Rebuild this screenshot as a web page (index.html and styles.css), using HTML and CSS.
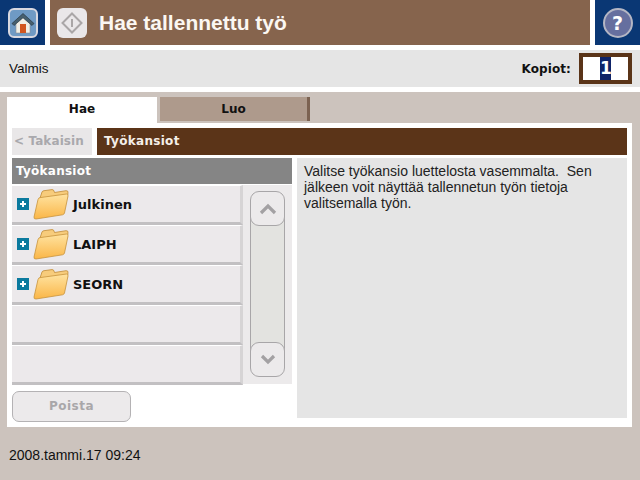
FILE: index.html
```html
<!doctype html>
<html lang="fi">
	<head>
		<meta charset="utf-8">
		<title>Hae tallennettu työ</title>
		<link rel="stylesheet" href="styles.css">
	</head>
	<body>
		<svg class="defs" width="0" height="0">
			<defs>
				<linearGradient id="folder-front" x1="0" y1="0" x2="0" y2="1">
					<stop offset="0" stop-color="#ffe3a0"/>
					<stop offset="1" stop-color="#fab648"/>
				</linearGradient>
				<g id="folder-icon">
					<path d="M7 10 L9 4 Q9.500 2.800 11 2.700 L19 1.600 Q20.500 1.500 21 3 L21.500 4.500 L33 2.700 Q35.500 2.500 35 5 L34 10 Z" fill="#f7cc7c" stroke="#c08a35" stroke-width="0.8"/>
					<path d="M1 29 L5 11.500 Q5.500 9.800 7 9.600 L33.500 6 Q35.500 5.900 35 8 L31.500 25 Q31 26.500 29.500 26.800 L3 31 Q0.700 31.200 1 29 Z" fill="url(#folder-front)" stroke="#c8933c" stroke-width="0.8"/>
				</g>
			</defs>
		</svg>

		<div class="header">
			<div class="nav-box">
				<div class="home-btn">
					<svg width="24" height="24" viewBox="0 0 24 24">
						<path d="M5 12 L12 6 L19 12 V22 H5 Z" fill="#f1efe6" stroke="#8a8f96" stroke-width="0.6"/>
						<path d="M12 2.500 L23 12.500 L21 14.500 L12 6.800 L3 14.500 L1 12.500 Z" fill="#47606f" stroke="#1f2c35" stroke-width="0.6"/>
						<rect x="9" y="13" width="6" height="9" fill="#d2561f"/>
					</svg>
				</div>
			</div>
			<div class="title-bar">
				<div class="start-btn">
					<svg width="24" height="24" viewBox="0 0 24 24">
						<path d="M12 2.500 L21.500 12 L12 21.500 L2.500 12 Z" fill="none" stroke="#aaa6a7" stroke-width="2"/>
						<rect x="11" y="8" width="2" height="8" fill="#aaa6a7"/>
					</svg>
				</div>
				<span class="title-text">Hae tallennettu työ</span>
			</div>
			<div class="nav-box">
				<div class="help-btn">?</div>
			</div>
		</div>

		<div class="status">
			<span class="status-text">Valmis</span>
			<span class="copies-label">Kopiot:</span>
			<div class="copies-input"><span class="copies-sel">1</span></div>
		</div>

		<div class="main">
			<div class="tabs">
				<div class="tab tab-active">Hae</div>
				<div class="tab tab-other">Luo</div>
			</div>
			<div class="panel">
				<div class="crumbs">
					<div class="back-btn">&lt; Takaisin</div>
					<div class="crumb-title">Työkansiot</div>
				</div>
				<div class="columns">
					<div class="left">
						<div class="list-head">Työkansiot</div>
						<div class="list-wrap">
							<div class="rows">
								<div class="row">
									<span class="plus"></span>
									<svg class="folder" width="36" height="32" viewBox="0 0 36 32"><use href="#folder-icon"/></svg>
									<span class="row-name">Julkinen</span>
								</div>
								<div class="row">
									<span class="plus"></span>
									<svg class="folder" width="36" height="32" viewBox="0 0 36 32"><use href="#folder-icon"/></svg>
									<span class="row-name">LAIPH</span>
								</div>
								<div class="row">
									<span class="plus"></span>
									<svg class="folder" width="36" height="32" viewBox="0 0 36 32"><use href="#folder-icon"/></svg>
									<span class="row-name">SEORN</span>
								</div>
								<div class="row"></div>
								<div class="row"></div>
							</div>
							<div class="scroll">
								<div class="scroll-btn">
									<svg width="18" height="12" viewBox="0 0 18 12"><path d="M2 10 L9 3 L16 10" fill="none" stroke="#a3a1a3" stroke-width="3.2"/></svg>
								</div>
								<div class="scroll-btn">
									<svg width="18" height="12" viewBox="0 0 18 12"><path d="M3 2 L9 8 L15 2" fill="none" stroke="#a3a1a3" stroke-width="3.2"/></svg>
								</div>
							</div>
						</div>
						<div class="delete-btn">Poista</div>
					</div>
					<div class="info">Valitse työkansio luettelosta vasemmalta.&nbsp; Sen jälkeen voit näyttää tallennetun työn tietoja valitsemalla työn.</div>
				</div>
			</div>
			<div class="footer">2008.tammi.17 09:24</div>
		</div>
	</body>
</html>
```

FILE: styles.css
```css
html, body {
	margin: 0;
	padding: 0;
}
body {
	width: 640px;
	height: 480px;
	overflow: hidden;
	background: #fff;
	color: #111;
	font-family: "Liberation Sans", Arial, sans-serif;
	font-size: 14px;
}
.defs {
	display: block;
}

.header {
	display: flex;
	gap: 5px;
	height: 45px;
}
.nav-box {
	width: 45px;
	background: #0a3774;
	display: flex;
	align-items: center;
	justify-content: center;
}
.home-btn {
	width: 30px;
	height: 30px;
	border-radius: 6px;
	background: #6f9ac4;
	border: 2px solid #d8d8e0;
	box-sizing: border-box;
	display: flex;
	align-items: center;
	justify-content: center;
}
.help-btn {
	width: 30px;
	height: 30px;
	box-sizing: border-box;
	border-radius: 50%;
	background: #666f9f;
	border: 2px solid #b4b6c4;
	color: #fff;
	font-family: "DejaVu Sans", sans-serif;
	font-weight: bold;
	font-size: 19px;
	line-height: 26px;
	text-align: center;
}
.title-bar {
	flex: 1;
	background: #86644d;
	display: flex;
	align-items: center;
	padding-left: 7px;
}
.start-btn {
	width: 30px;
	height: 30px;
	border-radius: 6px;
	background: #eae7e9;
	display: flex;
	align-items: center;
	justify-content: center;
}
.title-text {
	margin-left: 12px;
	color: #fbf7f2;
	font-size: 21px;
	font-weight: bold;
}

.status {
	display: flex;
	align-items: center;
	height: 37px;
	margin-top: 5px;
	padding: 0 8px 0 9px;
	background: #e5e5e5;
}
.status-text {
	flex: 1;
	font-size: 13.5px;
}
.copies-label {
	font-family: "DejaVu Sans", sans-serif;
	font-weight: bold;
	font-size: 12px;
	letter-spacing: 0.1px;
	margin-right: 8px;
}
.copies-input {
	width: 53px;
	height: 31px;
	box-sizing: border-box;
	border: 4px solid #5a3418;
	background: #fff;
	padding-left: 17px;
	display: flex;
	align-items: center;
}
.copies-sel {
	background: #0e2368;
	color: #fff;
	font-family: "DejaVu Sans", sans-serif;
	font-weight: bold;
	font-size: 17px;
	line-height: 23px;
	width: 11px;
	text-align: center;
}

.main {
	height: 388px;
	margin-top: 5px;
	padding: 5px 8px 0 7px;
	box-sizing: border-box;
	background: #ccc3bd;
}
.tabs {
	display: flex;
	gap: 3px;
	height: 26px;
}
.tab {
	font-family: "DejaVu Sans", sans-serif;
	font-weight: bold;
	font-size: 12px;
	text-align: center;
	box-sizing: border-box;
}
.tab-active {
	width: 150px;
	background: #fff;
	line-height: 25px;
}
.tab-other {
	width: 150px;
	height: 24px;
	line-height: 24px;
	background: #ae9a8c;
	border-right: 3px solid #7c6251;
}

.panel {
	height: 304px;
	box-sizing: border-box;
	padding: 5px;
	background: #fff;
}
.crumbs {
	display: flex;
	gap: 5px;
	height: 27px;
	font-family: "DejaVu Sans", sans-serif;
	font-weight: bold;
	font-size: 12px;
	letter-spacing: 0.3px;
	line-height: 27px;
}
.back-btn {
	width: 80px;
	box-sizing: border-box;
	padding-left: 2px;
	background: #e9e7e8;
	color: #a9a9ad;
	letter-spacing: 0.1px;
}
.crumb-title {
	flex: 1;
	padding-left: 7px;
	background: #5b3418;
	color: #f5efe8;
}

.columns {
	display: flex;
	gap: 5px;
	margin-top: 3px;
}
.left {
	width: 280px;
}
.list-head {
	height: 26px;
	padding-left: 4px;
	background: #858585;
	color: #fff;
	font-family: "DejaVu Sans", sans-serif;
	font-weight: bold;
	font-size: 12px;
	letter-spacing: 0.25px;
	line-height: 27px;
}
.list-wrap {
	display: flex;
	margin-top: 1px;
}
.rows {
	width: 231px;
}
.row {
	height: 40px;
	box-sizing: border-box;
	display: flex;
	align-items: center;
	padding-left: 5px;
	background: #ece9eb;
	border-top: 1px solid #fff;
	border-bottom: 3px solid #c2c0c2;
	border-right: 3px solid #d6d4d5;
}
.plus {
	width: 12px;
	height: 12px;
	position: relative;
	background: #0b7a9e;
	flex: none;
}
.plus::before {
	content: "";
	position: absolute;
	left: 3px;
	top: 5px;
	width: 6px;
	height: 2px;
	background: #fff;
}
.plus::after {
	content: "";
	position: absolute;
	left: 5px;
	top: 3px;
	width: 2px;
	height: 6px;
	background: #fff;
}
.folder {
	margin-left: 4px;
	flex: none;
}
.row-name {
	margin-left: 4px;
	font-family: "DejaVu Sans", sans-serif;
	font-weight: bold;
	font-size: 13px;
}
.scroll {
	width: 49px;
	height: 199px;
	box-sizing: border-box;
	padding: 6px 7px 7px;
	background: #eceaeb;
	display: flex;
	flex-direction: column;
	justify-content: space-between;
	position: relative;
}
.scroll::before {
	content: "";
	position: absolute;
	left: 7px;
	right: 7px;
	top: 20px;
	bottom: 20px;
	background: #e3e3e0;
	border-left: 1px solid #a8a6a8;
	border-right: 1px solid #a8a6a8;
}
.scroll-btn {
	position: relative;
	height: 35px;
	box-sizing: border-box;
	border: 1px solid #a8a6a8;
	border-radius: 9px;
	background: #eceaeb;
	display: flex;
	align-items: center;
	justify-content: center;
}
.delete-btn {
	width: 119px;
	height: 31px;
	box-sizing: border-box;
	margin-top: 6px;
	border: 1px solid #b4b2b4;
	border-radius: 7px;
	background: #eceaeb;
	color: #a9a7a9;
	font-family: "DejaVu Sans", sans-serif;
	font-weight: bold;
	font-size: 12px;
	letter-spacing: 0.5px;
	line-height: 28px;
	text-align: center;
}
.info {
	flex: 1;
	height: 260px;
	box-sizing: border-box;
	padding: 5px 30px 5px 7px;
	background: #e5e5e5;
	font-size: 14px;
	line-height: 16px;
	color: #222;
}

.footer {
	padding: 20px 0 0 2px;
	font-size: 14px;
}
```
